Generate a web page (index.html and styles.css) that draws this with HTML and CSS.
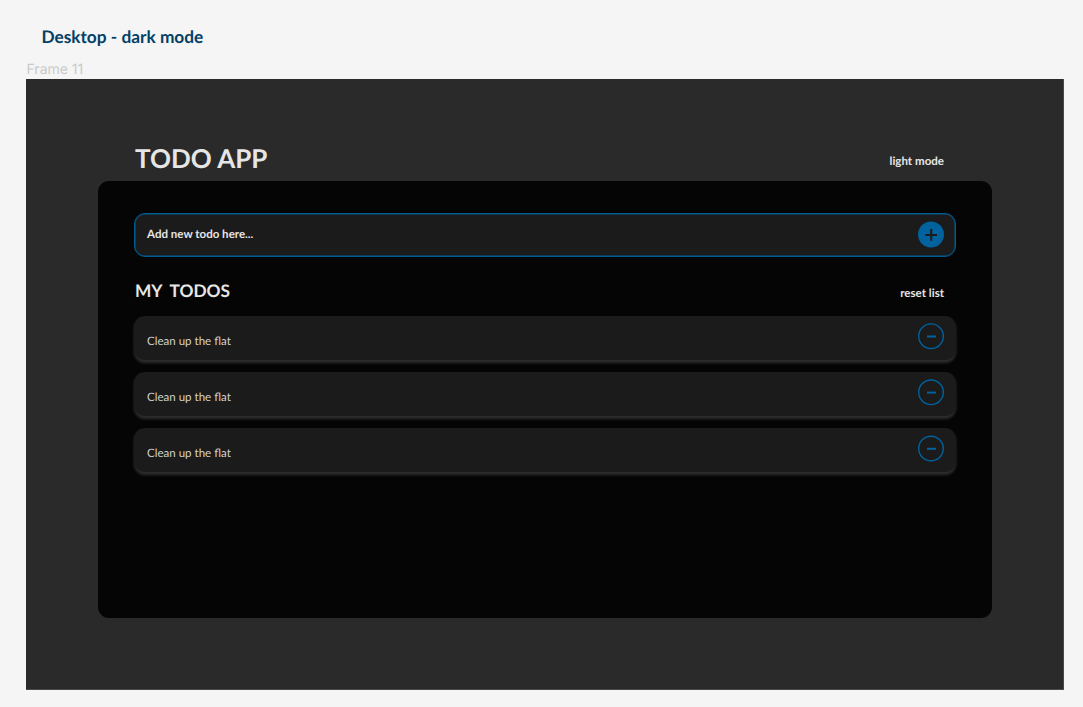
FILE: index.html
```html
<!DOCTYPE html>
<html lang="en">
<head>
<meta charset="utf-8">
<title>Todo App</title>
<link rel="stylesheet" href="styles.css">
</head>
<body>
<h2 class="board-title"><span>Desktop - dark mode</span></h2>
<div class="frame-label"><span>Frame 11</span></div>
<main class="frame">
  <header class="app-header">
    <h1 class="app-title">TODO APP</h1>
    <span class="mode">light mode</span>
  </header>
  <section class="panel">
    <div class="new-todo">
      <span class="placeholder">Add new todo here...</span>
      <svg class="icon" viewBox="0 0 26 27"><circle cx="13" cy="13.5" r="13" fill="#01629e"/><path d="M7.4 13.9H19M13.2 8V19.8" stroke="#1b1b1b" stroke-width="2"/></svg>
    </div>
    <div class="list-header">
      <h2 class="list-title">MY TODOS</h2>
      <span class="reset">reset list</span>
    </div>
    <ul class="todos">
      <li class="todo"><span class="todo-text">Clean up the flat</span><svg class="icon" viewBox="0 0 26 27"><circle cx="13" cy="13.2" r="12.3" fill="none" stroke="#01629e" stroke-width="1.4"/><path d="M9 13.5H18" stroke="#01629e" stroke-width="2"/></svg></li>
      <li class="todo"><span class="todo-text">Clean up the flat</span><svg class="icon" viewBox="0 0 26 27"><circle cx="13" cy="13.3" r="12.3" fill="none" stroke="#01629e" stroke-width="1.4"/><path d="M9 13.6H18" stroke="#01629e" stroke-width="2"/></svg></li>
      <li class="todo"><span class="todo-text">Clean up the flat</span><svg class="icon" viewBox="0 0 26 27"><circle cx="13" cy="13.5" r="12.3" fill="none" stroke="#01629e" stroke-width="1.4"/><path d="M9 13.8H18" stroke="#01629e" stroke-width="2"/></svg></li>
    </ul>
  </section>
</main>
</body>
</html>
```
FILE: styles.css
```css
* { box-sizing: border-box; margin: 0; padding: 0; }
body {
  height: 707px;
  padding: 24px 19px 0 26px;
  overflow: hidden;
  background: #f5f5f5;
  color: #e6e6e6;
  font-family: Lato, sans-serif;
  text-rendering: geometricPrecision;
}
.board-title {
  height: 36px;
  padding-left: 15.4px;
  color: #043f66;
  font-size: 17.3px;
  font-weight: 700;
  line-height: 25px;
}
.frame-label {
  height: 19px;
  padding-left: 0.5px;
  color: #c9c9c9;
  font: 14px/19px Inter, sans-serif;
}
.frame {
  height: 611px;
  padding: 60px 72px 0;
  background: #2a2a2a;
  border: solid #4a4a4a;
  border-width: 0 1px 1px 0;
}
.app-header {
  display: flex;
  justify-content: space-between;
  height: 42px;
  padding: 0 47px 0 37px;
}
.app-title { font-size: 26px; font-weight: 700; line-height: 39px; }
.mode { font-size: 11.55px; font-weight: 700; line-height: 45px; }
.panel {
  height: 437px;
  margin-right: -0.5px;
  padding: 32px 36px 0;
  border-radius: 11px;
  background: #050505;
}
.new-todo {
  display: flex;
  justify-content: space-between;
  height: 44px;
  padding: 7px 10.5px 0 12px;
  border: 1px solid #015a91;
  border-radius: 11px;
  background: #1b1b1b;
  box-shadow: inset 0 0 0 0.5px #015a91;
}
.placeholder { padding-top: 5px; font-size: 11.55px; font-weight: 700; line-height: 17px; }
.icon { display: block; width: 26px; height: 27px; }
.list-header {
  display: flex;
  justify-content: space-between;
  height: 59px;
  padding: 22px 11.5px 0 1px;
}
.list-title { font-size: 17.3px; font-weight: 700; line-height: 24px; word-spacing: 4px; }
.reset { font-size: 11.55px; font-weight: 700; line-height: 29px; }
.todos { display: grid; gap: 12.2px; list-style: none; }
.todo {
  display: flex;
  justify-content: space-between;
  height: 44px;
  padding: 7px 11.5px 0 13px;
  border-radius: 11px;
  background: #1b1b1b;
  box-shadow: 0 2.9px 2.9px #2e2e2e;
}
.todo-text { padding-top: 10px; color: #d2d2d2; font-size: 11.55px; line-height: 17px; }
```
